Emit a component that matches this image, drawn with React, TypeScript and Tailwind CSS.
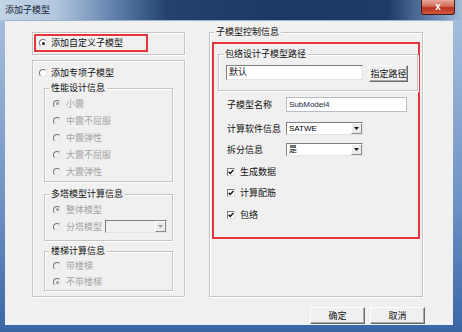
import React from "react";

const RED = "border-[#e6363c]";

function Radio({ checked = false, disabled = false }: { checked?: boolean; disabled?: boolean }) {
  return (
    <div
      className={`w-[8px] h-[8px] shrink-0 rounded-full border border-t-[#7a7a7a] border-l-[#7a7a7a] border-r-[#e8e8e8] border-b-[#e8e8e8] flex items-center justify-center ${
        disabled ? "bg-[#f0f0f0]" : "bg-white"
      }`}
    >
      {checked && (
        <div className={`w-[3px] h-[3px] rounded-full ${disabled ? "bg-[#9a9a9a]" : "bg-[#222]"}`} />
      )}
    </div>
  );
}

function Check() {
  return (
    <div className="w-[8px] h-[8px] shrink-0 bg-white border border-t-[#7a7a7a] border-l-[#7a7a7a] border-r-[#e0e0e0] border-b-[#e0e0e0] flex items-center justify-center">
      <svg width="6" height="6" viewBox="0 0 6 6">
        <path d="M0.6 2.8 L2.2 4.5 L5.4 1" stroke="#111" strokeWidth="1.4" fill="none" />
      </svg>
    </div>
  );
}

function GroupBox({
  label,
  className = "",
  children,
}: {
  label: string;
  className?: string;
  children?: React.ReactNode;
}) {
  return (
    <div className={`border border-[#c4c4c4] shadow-[inset_1px_1px_0_#fff,1px_1px_0_#fff] flex flex-col ${className}`}>
      <div className="-mt-[7px] ml-[4px] w-fit px-[2px] bg-[#f0f0f0] h-[12px] leading-[12px] text-[9px] text-[#111]">
        {label}
      </div>
      {children}
    </div>
  );
}

function Combo({ value, w, disabled = false }: { value: string; w: string; disabled?: boolean }) {
  return (
    <div
      className={`${w} h-[13px] flex items-center border border-t-[#7f7f7f] border-l-[#7f7f7f] border-r-[#e3e3e3] border-b-[#e3e3e3] ${
        disabled ? "bg-[#f0f0f0]" : "bg-white"
      }`}
    >
      <div className="flex-1 pl-[2px] text-[8px] leading-[11px] text-black">{value}</div>
      <div className="w-[11px] h-[11px] bg-[#ececec] border border-t-white border-l-white border-r-[#8a8a8a] border-b-[#8a8a8a] flex items-center justify-center">
        <svg width="5" height="3" viewBox="0 0 5 3">
          <path d="M0 0 H5 L2.5 3 Z" fill={disabled ? "#a0a0a0" : "#111"} />
        </svg>
      </div>
    </div>
  );
}

function Btn({ label, className = "" }: { label: string; className?: string }) {
  return (
    <div
      className={`flex items-center justify-center bg-[#f0f0f0] border border-t-[#fdfdfd] border-l-[#fdfdfd] border-r-[#6a6a6a] border-b-[#6a6a6a] shadow-[inset_-1px_-1px_0_#a8a8a8] text-[9px] leading-[12px] text-[#111] ${className}`}
    >
      {label}
    </div>
  );
}

function RadioRow({
  label,
  checked = false,
  h = "h-[17px]",
  children,
}: {
  label: string;
  checked?: boolean;
  h?: string;
  children?: React.ReactNode;
}) {
  return (
    <div className={`${h} flex items-center pl-[8px]`}>
      <Radio checked={checked} disabled />
      <span className="ml-[5px] text-[9px] leading-[12px] text-[#a3a3a3]">{label}</span>
      {children}
    </div>
  );
}

export default function App() {
  return (
    <div className="w-[462px] h-[332px] flex flex-col bg-[linear-gradient(180deg,#aac2de_0%,#6f93c4_60%,#3a66a6_100%)] font-['Liberation_Sans','Noto_Sans_CJK_SC',sans-serif] select-none overflow-hidden">
      {/* title bar */}
      <div className="h-[20px] shrink-0 flex items-start bg-[linear-gradient(90deg,#c2d4e7_0%,#b2c7de_12%,#6585b0_24%,#23426f_36%,#1b3866_60%,#1d3a68_84%,#6f8fb8_95%,#a4bcd8_100%)]">
        <div className="ml-[5px] mt-[4px] text-[9px] leading-[12px] text-[#1b2436]">添加子模型</div>
        <div className="flex-1" />
        <div className="mr-[7px] w-[34px] h-[15px] rounded-b-[3px] border border-t-0 border-[#4b1a14] bg-[linear-gradient(180deg,#e7a99b_0%,#d06a56_45%,#b8321f_55%,#cf5a3f_100%)] flex items-center justify-center">
          <span className="text-[10px] leading-[10px] font-bold text-white">x</span>
        </div>
      </div>

      {/* client */}
      <div className="ml-[5px] mr-[9px] mb-[7px] flex-1 bg-[#f0f0f0] border-t border-[#9fb3cc] flex flex-col text-[9px] leading-[12px] text-[#111]">
        <div className="flex items-start pl-[27px] pt-[11px]">
          {/* left column */}
          <div className="w-[153px] flex flex-col">
            <div className="h-[23px] border border-[#c4c4c4] shadow-[inset_1px_1px_0_#fff,1px_1px_0_#fff] flex flex-col">
              <div className={`ml-[1px] mt-[1px] w-[114px] h-[18px] border-2 ${RED} flex items-center pl-[3px]`}>
                <Radio checked />
                <span className="ml-[4px]">添加自定义子模型</span>
              </div>
            </div>

            <div className="mt-[5px] h-[237px] border border-[#c4c4c4] shadow-[inset_1px_1px_0_#fff,1px_1px_0_#fff] flex flex-col">
              <div className="mt-[6px] ml-[6px] h-[12px] flex items-center">
                <Radio />
                <span className="ml-[4px]">添加专项子模型</span>
              </div>

              <GroupBox label="性能设计信息" className="mt-[9px] ml-[11px] w-[129px] h-[94px]">
                <div className="mt-[1px] flex flex-col">
                  <RadioRow label="小震" checked />
                  <RadioRow label="中震不屈服" />
                  <RadioRow label="中震弹性" />
                  <RadioRow label="大震不屈服" />
                  <RadioRow label="大震弹性" />
                </div>
              </GroupBox>

              <GroupBox label="多塔模型计算信息" className="mt-[12px] ml-[11px] w-[129px] h-[47px]">
                <div className="mt-[1px] flex flex-col">
                  <RadioRow label="整体模型" checked />
                  <RadioRow label="分塔模型">
                    <div className="ml-[3px]">
                      <Combo value="" w="w-[62px]" disabled />
                    </div>
                  </RadioRow>
                </div>
              </GroupBox>

              <GroupBox label="楼梯计算信息" className="mt-[10px] ml-[11px] w-[129px] h-[40px]">
                <div className="mt-[1px] flex flex-col">
                  <RadioRow label="带楼梯" h="h-[16px]" />
                  <RadioRow label="不带楼梯" h="h-[16px]" checked />
                </div>
              </GroupBox>
            </div>
          </div>

          {/* right column */}
          <GroupBox label="子模型控制信息" className="ml-[24px] w-[214px] h-[265px]">
            <div className={`mt-[4px] ml-[2px] w-[208px] h-[197px] border-2 ${RED} flex flex-col`}>
              <GroupBox label="包络设计子模型路径" className="mt-[10px] ml-[4px] w-[200px] h-[37px]">
                <div className="mt-[5px] ml-[7px] flex items-start">
                  <div className="w-[137px] h-[15px] bg-white border border-t-[#7f7f7f] border-l-[#7f7f7f] border-r-[#e3e3e3] border-b-[#e3e3e3] pl-[2px] leading-[13px]">
                    默认
                  </div>
                  <Btn label="指定路径" className="ml-[6px] w-[39px] h-[17px]" />
                </div>
              </GroupBox>

              <div className="mt-[6px] ml-[13px] h-[15px] flex items-center">
                <span className="w-[59px]">子模型名称</span>
                <div className="w-[121px] h-[15px] bg-white border border-[#b8bcc4] pl-[2px] text-[8px] leading-[13px] text-[#1e2a44]">
                  SubModel4
                </div>
              </div>

              <div className="mt-[10px] ml-[13px] h-[13px] flex items-center">
                <span className="w-[59px]">计算软件信息</span>
                <Combo value="SATWE" w="w-[77px]" />
              </div>

              <div className="mt-[8px] ml-[13px] h-[13px] flex items-center">
                <span className="w-[59px]">拆分信息</span>
                <Combo value="是" w="w-[77px]" />
              </div>

              <div className="mt-[10px] ml-[13px] h-[12px] flex items-center">
                <Check />
                <span className="ml-[5px]">生成数据</span>
              </div>
              <div className="mt-[9px] ml-[13px] h-[12px] flex items-center">
                <Check />
                <span className="ml-[5px]">计算配筋</span>
              </div>
              <div className="mt-[10px] ml-[13px] h-[12px] flex items-center">
                <Check />
                <span className="ml-[5px]">包络</span>
              </div>
            </div>
          </GroupBox>
        </div>

        <div className="mt-[10px] flex justify-end pr-[28px]">
          <Btn label="确定" className="w-[55px] h-[17px]" />
          <Btn label="取消" className="ml-[5px] w-[55px] h-[17px]" />
        </div>
      </div>
    </div>
  );
}
